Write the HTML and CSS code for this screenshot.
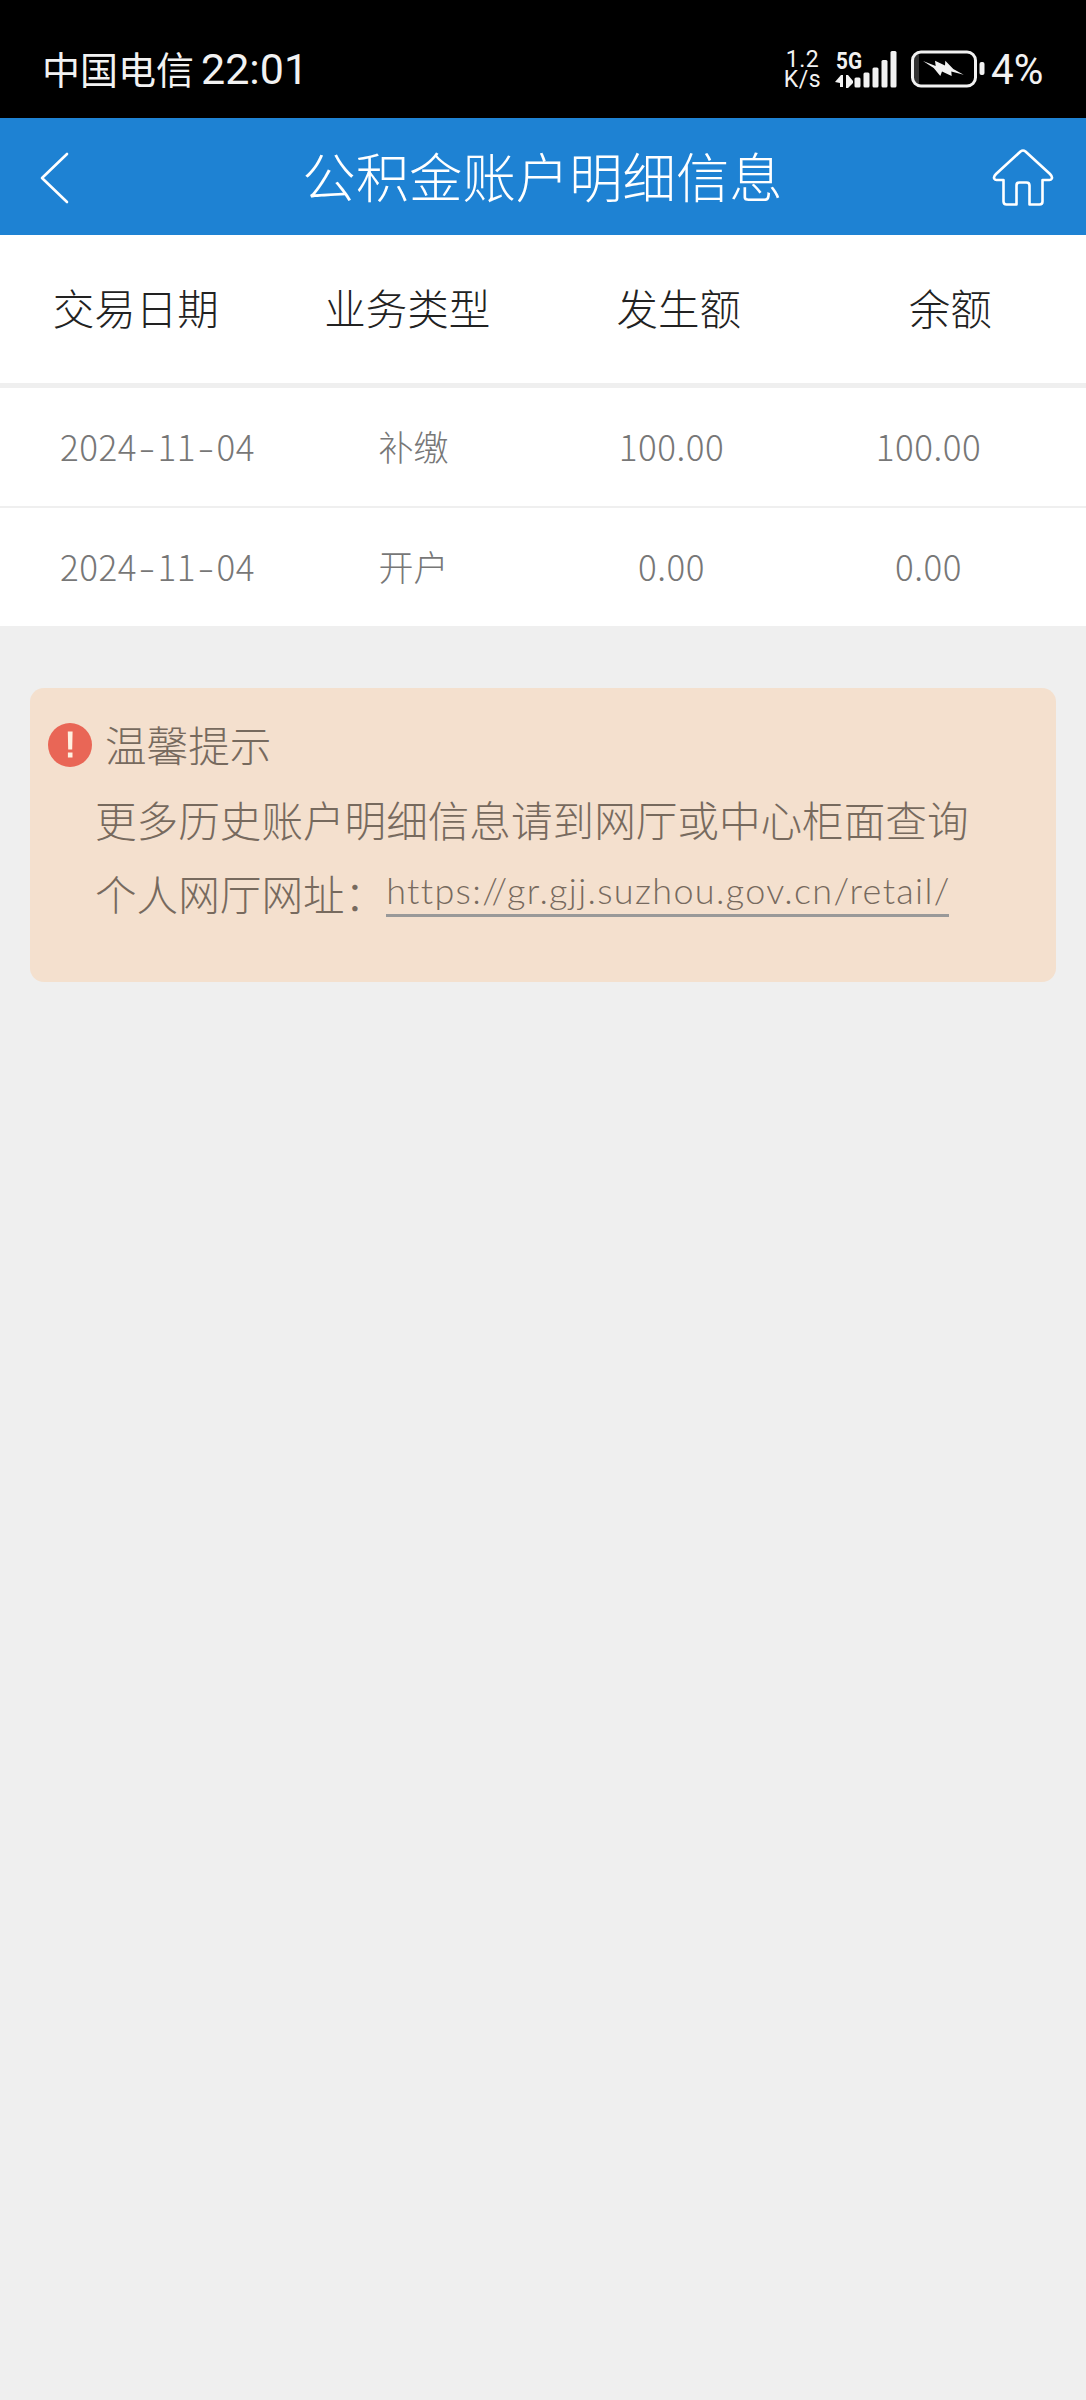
FILE: index.html
```html
<!DOCTYPE html>
<html lang="zh-CN">
<head>
<meta charset="utf-8">
<title>公积金账户明细信息</title>
<link rel="stylesheet" href="styles.css">
</head>
<body>
<div class="status">
  <span class="carrier">中国电信</span>
  <span class="time">22:01</span>
  <span class="speed"><span>1.2</span><span>K/s</span></span>
  <svg class="signal" width="64" height="40" viewBox="0 0 64 40">
    <text class="net" x="0" y="19" textLength="26" lengthAdjust="spacingAndGlyphs">5G</text>
    <path d="M-1 32l6-7h2v12H4v-4zM10 25h2l5 6v2l-5 5h-2z"/>
    <rect x="18.500" y="27.500" width="6" height="10" rx="1.500"/>
    <rect x="27.500" y="22.500" width="6" height="15" rx="1.500"/>
    <rect x="36.500" y="17.500" width="6" height="20" rx="1.500"/>
    <rect x="45.500" y="10" width="6" height="27.500" rx="1.500"/>
    <rect x="54.500" y="1" width="6" height="36.500" rx="1.500"/>
  </svg>
  <svg class="battery" width="76" height="40" viewBox="0 0 76 40">
    <path class="level" d="M9 3v32c-4 0-6-2-6-7V10c0-5 2-7 6-7z"/>
    <rect class="case" x="2.500" y="2" width="63" height="34" rx="8.500"/>
    <rect x="69.500" y="12" width="5" height="13" rx="2"/>
    <path d="M13 11L25.700 16 25 10.700 35 15.500 35.300 10.700 43.300 19 53.700 24.700 41.300 21.500 41.700 26 32 21.500 30.300 26 23.700 18z"/>
  </svg>
  <span class="percent">4%</span>
</div>
<header class="bar">
  <svg width="32" height="56" viewBox="0 0 32 56"><path d="M28 5L3 29l25 24"/></svg>
  <h1>公积金账户明细信息</h1>
  <svg width="64" height="60" viewBox="0 0 64 60"><path d="M29.500 4.500q2.500-2 5 0L59 27q3 3 1.500 5-.5 1-2 1H51.500v21.500q0 3-3 3H38.500V38.500q0-3-3-3h-7q-3 0-3 3v19H15.500q-3 0-3-3V33H5.500q-1.500 0-2-1Q2 30 5 27z"/></svg>
</header>
<main>
  <div class="thead"><span>交易日期</span><span>业务类型</span><span>发生额</span><span>余额</span></div>
  <div class="row"><span class="num">2024<i>-</i>11<i>-</i>04</span><span>补缴</span><span class="num">100.00</span><span class="num">100.00</span></div>
  <div class="row"><span class="num">2024<i>-</i>11<i>-</i>04</span><span>开户</span><span class="num">0.00</span><span class="num">0.00</span></div>
  <section class="notice">
    <div class="notice-title">
      <svg width="46" height="46" viewBox="0 0 46 46"><circle cx="23" cy="24" r="22"/><path d="M20.800 10.500h4.800l-.4 18h-4zM20.900 31.500h4.600v5h-4.600z"/></svg>
      <span>温馨提示</span>
    </div>
    <p>更多历史账户明细信息请到网厅或中心柜面查询</p>
    <p class="site"><span>个人网厅网址：</span><a>https://gr.gjj.suzhou.gov.cn/retail/</a></p>
  </section>
</main>
</body>
</html>
```
FILE: styles.css
```css
* { box-sizing: border-box; }
body {
  margin: 0;
  min-height: 2400px;
  background: #efefef;
  font-family: "Noto Sans CJK SC", sans-serif;
  font-weight: 300;
}
svg { display: block; flex: none; }

.status {
  display: flex;
  height: 118px;
  padding: 50px 0 0 42px;
  background: #000;
  color: #f2f2f2;
  font-family: Roboto, sans-serif;
  font-weight: 400;
  line-height: 38px;
  white-space: nowrap;
}
.carrier { width: 159px; font: 400 38px/35px "Noto Sans CJK SC", sans-serif; }
.time { width: 583px; font-size: 43px; }
.speed {
  display: flex;
  flex-direction: column;
  align-items: center;
  width: 37px;
  margin-right: 15px;
  font-size: 23px;
  line-height: 20px;
  letter-spacing: .5px;
}
.signal { fill: #f2f2f2; margin-right: 10px; overflow: visible; }
.net { font: 700 24px Roboto, sans-serif; }
.battery { fill: #f2f2f2; margin-right: 5px; }
.battery .case { fill: none; stroke: #f2f2f2; stroke-width: 3; }
.battery .level { fill: #333; }
.percent { font-size: 43px; transform: scaleX(.94); transform-origin: left; }

.bar {
  display: flex;
  align-items: center;
  justify-content: space-between;
  height: 117px;
  padding: 0 31px 0 39px;
  background: #1e82d3;
  color: #fff;
}
.bar svg { fill: none; stroke: #fff; stroke-width: 2.600; stroke-linecap: round; stroke-linejoin: round; }
.bar h1 { margin: 0 0 0 23px; font-size: 53.400px; font-weight: 300; line-height: 113px; height: 117px; }

.thead, .row {
  display: grid;
  grid-template-columns: repeat(4, 1fr);
  background: #fff;
  text-align: center;
}
.thead {
  height: 153px;
  border-bottom: 5px solid #efefef;
  color: #222;
  font-size: 41.500px;
  line-height: 145px;
}
.row {
  height: 118px;
  padding: 0 30px 0 28px;
  color: #777;
  font-size: 35px;
  line-height: 115px;
}
.row + .row { height: 120px; border-top: 2px solid #efefef; }
.num { padding-left: 2px; letter-spacing: .500px; }
.row i {
  display: inline-block;
  width: 20.500px;
  font-style: normal;
  transform: scaleX(1.400);
}

.notice {
  height: 294px;
  margin: 62px 30px 0;
  padding: 19px 0 0 17px;
  border-radius: 14px;
  background: #f4e0ce;
  color: #776a5e;
  font-size: 41.600px;
  line-height: 74.500px;
}
.notice-title { display: flex; align-items: center; gap: 12px; }
.notice-title circle { fill: #e96656; }
.notice-title path { fill: #fff0e0; }
.notice p { margin: 0 0 0 48px; white-space: nowrap; }
.site { display: flex; align-items: flex-start; }
.site a {
  width: 563px;
  height: 61px;
  border-bottom: 3px solid #999;
  font: 300 36px/68px Lato, sans-serif;
  font-variant-ligatures: none;
  letter-spacing: 1.330px;
}
```
